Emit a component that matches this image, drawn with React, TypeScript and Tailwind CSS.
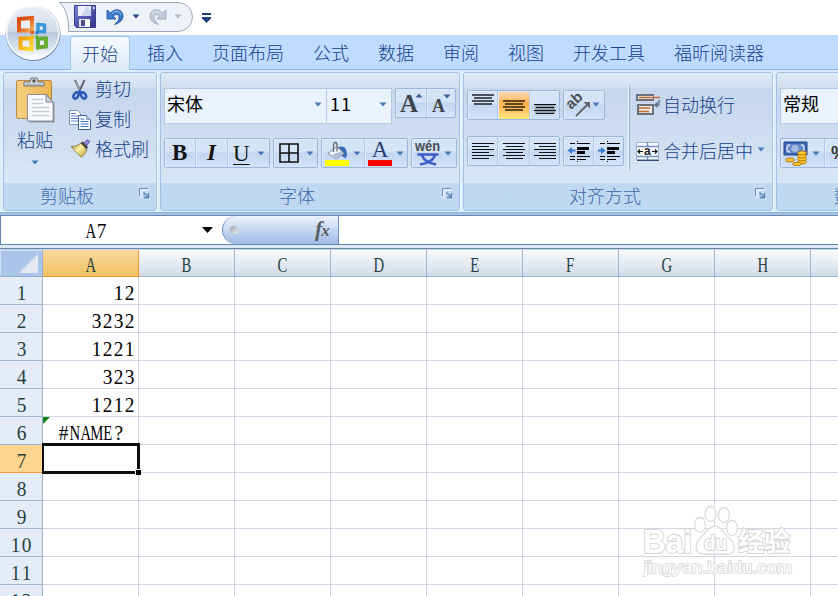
import React from "react";

const Caret = ({ className = "", color = "#4a78b5" }: { className?: string; color?: string }) => (
  <svg className={`shrink-0 ${className}`} width="8" height="5" viewBox="0 0 8 5">
    <path d="M0.5 0.5h7L4 4.5z" fill={color} />
  </svg>
);

const Launcher = () => (
  <svg width="11" height="11" viewBox="0 0 11 11" fill="none">
    <path d="M2 10.500V2H10.500" stroke="#fff" />
    <path d="M0.500 8V0.500H9" stroke="#6d93bd" />
    <path d="M4.500 4.500l4 4M9.500 5v4.500H5" stroke="#5b83b0" strokeWidth="1.3" />
  </svg>
);

const OfficeOrb = () => (
  <svg className="absolute left-1 top-[4px]" width="60" height="60" viewBox="0 0 60 60">
    <defs>
      <linearGradient id="orb" x1="0" y1="0" x2="0" y2="1">
        <stop offset="0" stopColor="#e9eef6" />
        <stop offset="0.47" stopColor="#d3dcea" />
        <stop offset="0.5" stopColor="#b9c6da" />
        <stop offset="0.8" stopColor="#dbe6f3" />
        <stop offset="1" stopColor="#fff" />
      </linearGradient>
      <linearGradient id="oRed" x1="0" y1="0" x2="1" y2="1">
        <stop offset="0" stopColor="#d9480f" />
        <stop offset="0.5" stopColor="#e2601c" />
        <stop offset="1" stopColor="#f5b05c" />
      </linearGradient>
      <linearGradient id="oYellow" x1="0" y1="0" x2="1" y2="1">
        <stop offset="0" stopColor="#ef9c09" />
        <stop offset="1" stopColor="#ffdc33" />
      </linearGradient>
    </defs>
    <circle cx="29" cy="29.500" r="27.500" fill="#76859c" />
    <circle cx="28.800" cy="28.800" r="26.300" fill="url(#orb)" stroke="#f7fbff" strokeWidth="1.600" />
    <g fill="#fff" fillOpacity="0.500">
      <path d="M15 15l13 -1v12.500H15z" stroke="url(#oRed)" strokeWidth="4" />
      <path d="M34 20.500l6.500.500v6.500H34z" stroke="#3b97d8" strokeWidth="3.400" />
      <path d="M16.500 34.500h11v11l-11-1.500z" stroke="url(#oYellow)" strokeWidth="4" />
      <path d="M34 34.500h8v8l-8 1z" stroke="#67ad35" strokeWidth="4" />
    </g>
    <path d="M26.500 26.500h3.500v3.500h-3.500z" fill="#e35f1b" />
    <path d="M31.500 27h3v3h-3z" fill="#277cc0" />
    <path d="M26.500 31.500h3.500v3h-3.500z" fill="#f5b919" />
    <path d="M31.500 31.500h3v3h-3z" fill="#55a82a" />
  </svg>
);

const SaveIcon = () => (
  <svg width="22" height="23" viewBox="0 0 22 23">
    <defs>
      <linearGradient id="sv" x1="0" y1="0" x2="1" y2="1">
        <stop offset="0" stopColor="#7d83dd" />
        <stop offset="1" stopColor="#2d3184" />
      </linearGradient>
    </defs>
    <path d="M0.500 0.500h21v22h-19l-2-2z" fill="url(#sv)" stroke="#3c3f91" />
    <path d="M4 1h13v10H4z" fill="#eef1fb" />
    <path d="M13 1l4 5v5H7z" fill="#cfd7ef" />
    <path d="M19 2h1.500v2H19z" fill="#fff" />
    <path d="M5 14h11v8H5z" fill="#dfe3f0" />
    <path d="M7 15h4v6H7z" fill="#4a4d91" />
    <path d="M11 15h5v7h-5z" fill="#fff" />
  </svg>
);

const UndoIcon = ({ gray = false }: { gray?: boolean }) => (
  <svg className={gray ? "-scale-x-100" : ""} width="18" height="18" viewBox="0 0 18 18">
    <path
      d="M1 2v9h9L7.500 8.200C10 5.500 13 6.200 13 9.500c0 2.600-1.700 4.700-4.500 7 5-1.500 8.500-4.200 8.500-8.500C17 1.500 9.500-.5 4.500 4.800z"
      fill={gray ? "#c5cddc" : "#3f78c6"}
      stroke={gray ? "#9ba8bd" : "#285ba9"}
      strokeWidth="0.900"
    />
    <path d="M5.500 6C9 2 14 2.500 15 7" fill="none" stroke={gray ? "#e5e9f0" : "#9fc4f0"} />
  </svg>
);

const PasteIcon = () => (
  <svg width="41" height="47" viewBox="0 0 41 47">
    <defs>
      <linearGradient id="clip" x1="0" y1="0" x2="1" y2="0">
        <stop offset="0" stopColor="#f7cf83" />
        <stop offset="1" stopColor="#edb650" />
      </linearGradient>
    </defs>
    <rect x="1.500" y="3.500" width="35" height="38" rx="1.500" fill="url(#clip)" stroke="#b58a45" />
    <path d="M9 9V5h6l1-4h6l1 4h6v4z" fill="#d5d8dc" stroke="#6f7479" />
    <circle cx="19" cy="4" r="1.800" fill="#55585c" />
    <path d="M11 8h16" stroke="#8b8e91" />
    <path d="M14 45.500V18h18l7.500 8v19.500z" fill="#8d949e" />
    <path d="M12.500 44V17.500h18.500l7 7.500v19z" fill="#fbfcff" stroke="#87909c" />
    <path d="M31 17.500V25h7z" fill="#ccd4de" stroke="#7c8794" />
    <path d="M16.500 22.500h12M16.500 26.500h12M16.500 30.500h18M16.500 34.500h18M16.500 38.500h18" stroke="#c4cad6" strokeWidth="1.300" />
  </svg>
);

const CutIcon = () => (
  <svg width="16" height="22" viewBox="0 0 16 22" fill="none">
    <path d="M3 1l6 13M12.500 1L6.500 14" stroke="#5e6671" strokeWidth="2" />
    <path d="M3.500 2l5 11" stroke="#d8dee8" strokeWidth="0.700" />
    <path d="M6.500 12l2.500 2" stroke="#2855b5" strokeWidth="3" />
    <ellipse cx="4" cy="16.500" rx="2.200" ry="3.200" transform="rotate(30 4 16.500)" stroke="#2d59bb" strokeWidth="2.600" />
    <ellipse cx="11.500" cy="16.500" rx="2.200" ry="3.200" transform="rotate(-30 11.500 16.500)" stroke="#2d59bb" strokeWidth="2.600" />
  </svg>
);

const CopyIcon = () => (
  <svg width="22" height="20" viewBox="0 0 22 20">
    <g stroke="#7894bd" fill="#fff">
      <path d="M0.500 0.500h8l3 3v11h-11z" />
      <path d="M2 3.500h5M2 6h7M2 8.500h7M2 11h7" stroke="#5d86c8" />
      <path d="M9.500 5.500h8l4 4v10h-12z" stroke="#385e99" />
      <path d="M17.500 5.500v4h4" fill="#c4d5ee" />
      <path d="M11.500 9h4M11.500 11.500h8M11.500 14h8M11.500 16.500h8" stroke="#3e6fc0" />
    </g>
  </svg>
);

const BrushIcon = () => (
  <svg width="21" height="19" viewBox="0 0 21 19">
    <defs>
      <linearGradient id="br" x1="0" y1="0" x2="1" y2="1">
        <stop offset="0" stopColor="#8c8130" />
        <stop offset="0.450" stopColor="#fff3a0" />
        <stop offset="1" stopColor="#b59336" />
      </linearGradient>
    </defs>
    <path d="M13 5.500L17 .8l3 1.500-4 5z" fill="#9b8bdd" stroke="#6a59ae" />
    <path d="M1 7.500C5 7.500 8 6.500 11 4l6 6c-1 3.500-3 6.500-6 8z" fill="url(#br)" stroke="#817139" strokeWidth="0.800" />
    <path d="M10.500 4l2.500-1.500L18 8l-1.500 2.500z" fill="#474747" />
  </svg>
);

const BucketIcon = () => (
  <svg width="24" height="27" viewBox="0 0 24 27">
    <path d="M13 7c6-2 9 1 9 8l-1.500 3.500-3.500-2.500c1-4-.5-6-4-6z" fill="#386bb5" />
    <path d="M3 13.500l9-7 7 7-8 5.500z" fill="#f2f6fc" stroke="#7f8ca0" />
    <path d="M7 14.500l9-3 2 2.500-7 4z" fill="#aabbd8" />
    <path d="M8.500 12V5.500c0-4 3.500-4 3.500 0v6" fill="none" stroke="#636a74" strokeWidth="1.300" />
    <path d="M0 20h24v6H0z" fill="#ff0" />
  </svg>
);

const WenIcon = () => (
  <svg width="26" height="28" viewBox="0 0 26 28">
    <text x="0" y="12" textLength="25" lengthAdjust="spacingAndGlyphs" fontFamily="Liberation Sans" fontSize="14" fontWeight="700" fill="#484c55">wén</text>
    <path d="M2.500 15.500h21M7 16.500c2 5 8 8 14 9M20 16.500c-2 5-8 8-15 9" fill="none" stroke="#3c5dc4" strokeWidth="2.400" />
  </svg>
);

const AlignIcon = ({ kind }: { kind: "top" | "middle" | "bottom" | "left" | "center" | "right" }) => {
  const vertical = kind === "top" || kind === "middle" || kind === "bottom";
  const widths = vertical ? [22, 18, 22, 18] : [22, 17, 22, 17, 22, 17];
  const start = kind === "top" ? 0 : kind === "middle" ? 6 : kind === "bottom" ? 10 : 0;
  return (
    <svg width="24" height="24" viewBox="0 0 24 24" shapeRendering="crispEdges">
      {kind === "bottom" && <path d="M2 11h20v10H2z" fill="#98a3b3" />}
      {widths.map((w, i) => (
        <rect
          key={i}
          x={kind === "left" ? 1 : kind === "right" ? 23 - w : 12 - w / 2}
          y={start + i * 3 + 1}
          width={w}
          height={kind === "top" || kind === "middle" ? 2 : 1}
          fill={kind === "middle" ? "#62461d" : kind === "top" ? "#4c525c" : "#101216"}
        />
      ))}
    </svg>
  );
};

const IndentIcon = ({ right = false }: { right?: boolean }) => (
  <svg width="24" height="21" viewBox="0 0 24 21">
    <g fill="#050607" shapeRendering="crispEdges">
      <path d="M3 2h5v1H3zM10 2h13v1H10zM10 6h12v3H10zM10 10h8v3h-8zM3 15h5v1H3zM10 15h13v1H10zM3 18h5v1H3zM10 18h9v1h-9zM10 0h1v1h-1zM10 20h1v1h-1z" />
    </g>
    <path d={right ? "M1 8.500h3V6l4.500 3.500L4 13v-2.500H1z" : "M8.500 8.500H5V6L.5 9.500 5 13v-2.500h3.500z"} fill="#3979d4" />
  </svg>
);

const OrientIcon = () => (
  <svg width="28" height="26" viewBox="0 0 28 26">
    <text x="0" y="0" transform="translate(7 18) rotate(-43)" fontFamily="Liberation Sans" fontSize="15" fontWeight="700" fill="#4c5058">ab</text>
    <path d="M12 24L24 12" fill="none" stroke="#66666d" strokeWidth="2" />
    <path d="M19.500 10H26v6.500z" fill="#66666d" />
  </svg>
);

const WrapIcon = () => (
  <svg width="25" height="24" viewBox="0 0 25 24">
    <path d="M0 1h18v7H0zM1 11h17v11H1z" fill="#6b717c" />
    <path d="M2 3h15v3H2zM3 13h13v7H3z" fill="#eee9e2" />
    <path d="M3 4.500h21M3 15h11M3 18.500h10" stroke="#c46c35" strokeWidth="1.500" />
    <path d="M23 7v5h-3" fill="none" stroke="#657897" strokeWidth="1.500" />
    <path d="M21.500 8.500v6.500l-3.500-3z" fill="#566a8c" />
  </svg>
);

const MergeIcon = () => (
  <svg width="24" height="19" viewBox="0 0 24 19">
    <path d="M.5.500h22v17H.5z" fill="#f9fbff" stroke="#99afd0" />
    <path d="M1 4.500h22M1 14.500h22M11.500 0v4M11.500 15v3" stroke="#7694c2" strokeWidth="1.500" />
    <path d="M1 18.500h22" stroke="#334b6f" />
    <path d="M2 9.500h5M4 7.500L2 9.500 4 11.500M21 9.500h-5M19 7.500L21 9.500 19 11.500" fill="none" stroke="#111" strokeWidth="1.200" />
    <text x="8" y="13" fontFamily="Liberation Sans" fontSize="12" fontWeight="700" fill="#222">a</text>
  </svg>
);

const MoneyIcon = () => (
  <svg width="26" height="25" viewBox="0 0 26 25">
    <path d="M1 1h23v13H1z" fill="#3e65ae" stroke="#26488b" />
    <path d="M3 3h19v9H3z" fill="#6588c8" />
    <circle cx="12" cy="7.500" r="3.500" fill="#aabbe1" />
    <path d="M7 4c-4 0-4 7 0 7M18 4c4 0 4 7 0 7" fill="none" stroke="#d2dcf4" strokeWidth="1.500" />
    <g fill="#ffc72c" stroke="#a06c0d" strokeWidth="0.800">
      <ellipse cx="19" cy="21" rx="4.500" ry="2" />
      <ellipse cx="19" cy="18" rx="4.500" ry="2" />
      <ellipse cx="19" cy="15" rx="4.500" ry="2" />
      <ellipse cx="19" cy="12" rx="4.500" ry="2" />
      <ellipse cx="7" cy="19" rx="4.500" ry="2" />
      <ellipse cx="14" cy="23" rx="4.500" ry="1.800" />
    </g>
  </svg>
);

const BtnGroup = ({ className = "", children }: { className?: string; children: React.ReactNode }) => (
  <div
    className={`flex h-[30px] shrink-0 rounded-[2px] border border-[#9bb6dc] bg-linear-to-b from-[#d4e3f5] from-45% via-[#c3d6f0] via-50% to-[#d3e3f8] ${className}`}
  >
    {children}
  </div>
);

const Btn = ({ className = "", children }: { className?: string; children: React.ReactNode }) => (
  <div className={`flex shrink-0 items-center border-r border-[#b3c8e4] shadow-[inset_1px_1px_0_#dfeafa] last:border-r-0 ${className}`}>{children}</div>
);

const Group = ({ className = "", label, labelClass = "", launcher = true, children }: {
  className?: string; label: string; labelClass?: string; launcher?: boolean; children: React.ReactNode;
}) => (
  <section
    className={`flex h-[139px] shrink-0 flex-col overflow-hidden rounded-[3px] border border-[#a3c1e2] shadow-[1px_1px_0_#f0f8ff] ${className}`}
  >
    <div className="h-[110px] bg-linear-to-b from-[#dfeaf6] from-0% via-[#d3dff0] via-13% to-[#d9e8f6]">
      <div className="h-full bg-linear-to-b from-transparent from-13% via-[#c7d7ec] via-14% to-transparent">{children}</div>
    </div>
    <div className="flex h-[27px] items-center bg-linear-to-b from-[#c1d8f1] to-[#bfd9f2] text-[#3e6aaa]">
      <span className={`mb-[3px] grow leading-none ${labelClass}`}>{label}</span>
      {launcher && <span className="mr-[6px] mb-[6px] flex"><Launcher /></span>}
    </div>
  </section>
);

const tabs = ["开始", "插入", "页面布局", "公式", "数据", "审阅", "视图", "开发工具", "福昕阅读器"];

// Squeezes each glyph into an equal 11px cell, like the half-width glyphs of a Song typeface.
const HalfWidth = ({ text }: { text: string }) => (
  <span className="flex font-['Liberation_Serif',serif] text-[22px] leading-[28px]">
    {text.split("").map((c, i) => (
      <span key={i} className="flex w-[11px] justify-center">
        <span className={/[A-Z]/.test(c) ? "scale-x-[0.67]" : "scale-x-[0.88]"}>{c}</span>
      </span>
    ))}
  </span>
);

const columns = ["A", "B", "C", "D", "E", "F", "G", "H", ""];
const values = ["12", "3232", "1221", "323", "1212", "#NAME?", "", "", "", "", "", ""];

const PawMark = () => (
  <svg className="absolute left-[640px] top-[500px]" width="158" height="80" viewBox="0 0 158 80">
    <g fill="#fff" fillOpacity="0.850" stroke="#dcdcdc" strokeWidth="1.300">
      <ellipse cx="60" cy="25" rx="5.500" ry="7.500" />
      <ellipse cx="70.500" cy="14" rx="5.500" ry="7.500" />
      <ellipse cx="84" cy="15" rx="5.500" ry="7.500" />
      <ellipse cx="92" cy="28" rx="5.500" ry="7.500" />
      <path d="M75 26c6 0 7 6 13 11 9 7 8 18-2 17H64c-10 0-10-10-3-17 6-5 8-11 14-11z" />
    </g>
    <g fill="#fff" stroke="#d6d6d6" strokeWidth="2" paintOrder="stroke" fontFamily="Liberation Sans" fontWeight="700">
      <text x="3" y="53" fontSize="34" textLength="49" lengthAdjust="spacingAndGlyphs">Bai</text>
      <text x="64" y="50" fontSize="20" textLength="23" lengthAdjust="spacingAndGlyphs">du</text>
      <text x="98" y="51" fontSize="26" fontFamily="Noto Sans CJK SC" textLength="52">经验</text>
      <text x="4" y="73" fontSize="17" fontWeight="400" strokeWidth="1.600" textLength="148" lengthAdjust="spacingAndGlyphs">jingyan.baidu.com</text>
    </g>
  </svg>
);

export default function App() {
  return (
    <div className="relative flex h-[596px] w-[838px] flex-col overflow-hidden bg-white font-['Noto_Sans_CJK_SC',sans-serif] text-[18px] font-light text-[#15428b]">
      <header className="flex h-[35px] shrink-0">
        <div className="relative ml-[59px] mt-[2px] h-[30px] w-[137px]">
          <svg className="absolute inset-0" width="137" height="30" viewBox="0 0 137 30">
            <path d="M.5.500H119a14.500 14.500 0 0 1 0 29H9.500C10 17 7 6 .5.500z" fill="#edf2f9" stroke="#9ba8bb" />
          </svg>
          <div className="relative flex h-[28px] items-center pl-[15px]">
            <SaveIcon />
            <span className="ml-[10px] mt-px"><UndoIcon /></span>
            <Caret className="ml-[8px]" color="#24488c" />
            <span className="ml-[9px] mt-px"><UndoIcon gray /></span>
            <Caret className="ml-[7px]" color="#b5b8bd" />
          </div>
        </div>
        <svg className="ml-[5px] mt-[12px]" width="11" height="12" viewBox="0 0 11 12">
          <path d="M1 2h9M1 6h9" stroke="#1e3f7c" strokeWidth="2" />
          <path d="M1.500 7h8L5.500 11z" fill="#1e3f7c" />
        </svg>
      </header>

      <nav className="flex h-[35px] shrink-0 items-end gap-[5px] border-b border-[#8db2e3] bg-[#bfdbff] pl-[70px]">
        {tabs.map((t, i) => (
          <div
            key={t}
            className={
              i === 0
                ? "-mb-px h-[34px] rounded-t-[3px] border border-b-0 border-[#a0c4ef] bg-linear-to-b from-[#f5faff] to-[#dfeaf7] px-[11px] leading-[32px]"
                : "h-[33px] px-[12px] leading-[33px]"
            }
          >
            {t}
          </div>
        ))}
      </nav>

      <main className="flex h-[142px] shrink-0 gap-[3px] overflow-hidden border-b border-[#d3f7fd] bg-[#dcedfb] pl-[3px] pt-[2px]">
        <Group className="w-[154px]" label="剪贴板" labelClass="pl-[36px]">
          <div className="flex">
            <div className="flex w-[62px] flex-col items-center">
              <div className="mt-[4px] ml-px"><PasteIcon /></div>
              <span className="mt-[5px] leading-[21px]">粘贴</span>
              <Caret className="mt-[10px]" />
            </div>
            <div className="flex flex-col pt-[2px] leading-none">
              <div className="flex h-[30px] items-center"><span className="ml-[6px] mr-[7px]"><CutIcon /></span><span className="mb-[4px]">剪切</span></div>
              <div className="flex h-[30px] items-center"><span className="ml-[3px] mr-[4px]"><CopyIcon /></span><span className="mb-[4px]">复制</span></div>
              <div className="flex h-[30px] items-center"><span className="ml-[4px] mr-[4px] mb-[4px]"><BrushIcon /></span><span className="mb-[4px]">格式刷</span></div>
            </div>
          </div>
        </Group>

        <Group className="w-[300px]" label="字体" labelClass="pl-[118px]">
          <div className="flex flex-col pl-[3px] pt-[15px]">
            <div className="flex">
              <div className="flex h-[36px] w-[163px] items-center border border-[#b3c9e6] bg-[#eaf2fb] pl-[2px] pr-[4px] font-normal text-black">
                <span className="mb-[6px] grow leading-none">宋体</span><Caret className="mb-[3px]" />
              </div>
              <div className="flex h-[36px] w-[65px] items-center border border-l-0 border-[#b3c9e6] bg-[#eaf2fb] pl-[3px] pr-[4px] text-black">
                <span className="mb-[6px] grow font-normal leading-none tracking-[1px]">11</span><Caret className="mb-[3px]" />
              </div>
              <BtnGroup className="ml-[3px] w-[61px]">
                <Btn className="w-[31px] pl-[4px] font-['Liberation_Serif',serif] text-[25px] font-bold leading-none text-[#3f444c]">
                  <span>A</span><Caret className="-ml-[3px] mb-[16px] rotate-180" color="#425f98" />
                </Btn>
                <Btn className="w-[28px] pl-[5px] font-['Liberation_Serif',serif] text-[18px] font-bold leading-none text-[#3f444c]">
                  <span className="mt-[5px]">A</span><Caret className="-ml-[2px] mb-[14px]" color="#425f98" />
                </Btn>
              </BtnGroup>
            </div>
            <div className="mt-[14px] flex">
              <BtnGroup className="w-[106px] font-['Liberation_Serif',serif] text-[23px] text-[#111]">
                <Btn className="w-[31px] pl-[7px] font-bold">B</Btn>
                <Btn className="w-[32px] pl-[11px] font-bold italic">I</Btn>
                <Btn className="w-[41px] pl-[5px]"><span className="leading-[23px] underline underline-offset-[3px] decoration-1">U</span><Caret className="ml-[7px]" /></Btn>
              </BtnGroup>
              <BtnGroup className="ml-[3px] w-[45px]">
                <Btn className="w-[43px] pl-[5px]">
                  <svg width="20" height="20" viewBox="0 0 20 20"><path d="M1 1h18v18H1zM10 1v18M1 10h18" fill="none" stroke="#101010" strokeWidth="1.600" /></svg>
                  <Caret className="ml-[7px]" />
                </Btn>
              </BtnGroup>
              <BtnGroup className="ml-[3px] w-[87px]">
                <Btn className="w-[43px] pl-[3px]"><BucketIcon /><Caret className="ml-[4px]" /></Btn>
                <Btn className="w-[42px] pl-[3px]">
                  <span className="flex w-[24px] flex-col items-center font-['Liberation_Serif',serif] text-[23px] leading-[20px] text-[#243d70]">A<i className="h-[6px] w-full bg-[#ff0000]" /></span>
                  <Caret className="ml-[4px]" />
                </Btn>
              </BtnGroup>
              <BtnGroup className="ml-[3px] w-[46px]"><Btn className="w-[44px] pl-[3px]"><WenIcon /><Caret className="ml-[3px]" /></Btn></BtnGroup>
            </div>
          </div>
        </Group>

        <Group className="w-[310px]" label="对齐方式" labelClass="pl-[105px]">
          <div className="flex pl-[3px]">
            <div className="flex w-[161px] flex-col gap-[16px] pt-[17px]">
              <div className="flex">
                <BtnGroup className="w-[93px]">
                  <Btn className="w-[30px] justify-center"><AlignIcon kind="top" /></Btn>
                  <Btn className="w-[32px] justify-center bg-linear-to-b from-[#fbd6a4] from-10% via-[#ffae48] via-45% to-[#ffe982]"><AlignIcon kind="middle" /></Btn>
                  <Btn className="w-[29px] justify-center"><AlignIcon kind="bottom" /></Btn>
                </BtnGroup>
                <BtnGroup className="ml-[3px] w-[42px]"><Btn className="w-[40px]"><OrientIcon /><Caret className="mb-[2px]" /></Btn></BtnGroup>
              </div>
              <div className="flex">
                <BtnGroup className="w-[93px]">
                  <Btn className="w-[30px] justify-center pt-[5px]"><AlignIcon kind="left" /></Btn>
                  <Btn className="w-[32px] justify-center pt-[5px]"><AlignIcon kind="center" /></Btn>
                  <Btn className="w-[29px] justify-center pt-[5px]"><AlignIcon kind="right" /></Btn>
                </BtnGroup>
                <BtnGroup className="ml-[3px] w-[61px]">
                  <Btn className="w-[30px] pl-[3px] pt-px"><IndentIcon /></Btn>
                  <Btn className="w-[29px] pl-[3px] pt-px"><IndentIcon right /></Btn>
                </BtnGroup>
              </div>
            </div>
            <div className="mt-[13px] h-[84px] w-[2px] border-l border-r border-l-[#f3f8ff] border-r-[#8eaed8]" />
            <div className="flex flex-col pl-[6px] pt-[17px] leading-none">
              <div className="flex h-[30px] items-center"><WrapIcon /><span className="ml-[2px] mb-[2px]">自动换行</span></div>
              <div className="mt-[16px] flex h-[30px] items-center"><MergeIcon /><span className="ml-[3px] mb-[2px]">合并后居中</span><Caret className="ml-[4px] mb-[4px]" /></div>
            </div>
          </div>
        </Group>

        <Group className="w-[150px]" label="数字" labelClass="pl-[57px]">
          <div className="pl-[3px] pt-[15px]">
            <div className="flex h-[36px] items-center border border-[#b3c9e6] bg-[#eaf2fb] pl-[2px] font-normal text-black"><span className="mb-[6px] leading-none">常规</span></div>
            <BtnGroup className="mt-[14px] w-[120px]">
              <Btn className="w-[44px] pl-[2px]"><MoneyIcon /><Caret className="ml-[3px]" /></Btn>
              <Btn className="w-[40px] pl-[6px] font-['Liberation_Sans',sans-serif] font-bold text-[#333]">%</Btn>
            </BtnGroup>
          </div>
        </Group>
      </main>
      <div className="h-[3px] shrink-0 bg-linear-to-b from-[#8fb0da] to-[#b4cae8]" />

      <div className="flex h-[30px] shrink-0 border-y border-l border-[#6487b0] bg-white">
        <div className="flex w-[221px] items-center text-black">
          <span className="ml-[84px] mt-[2px]"><HalfWidth text="A7" /></span>
          <svg className="ml-[95px]" width="11" height="6" viewBox="0 0 11 6"><path d="M0 0h11L5.500 6z" fill="#000" /></svg>
        </div>
        <div className="flex h-[28px] w-[117px] items-center rounded-l-[15px] border-l border-r border-[#6f93c2] bg-linear-to-b from-[#edf3fc] to-[#9fbbe4] pl-[7px]">
          <span className="size-[8px] rounded-full bg-linear-to-br from-[#999da8] to-[#f2f3f7]" />
          <span className="ml-[77px] pb-[2px] font-['Liberation_Serif',serif] text-[22px] font-bold italic leading-none text-[#595e68]">f<span className="-ml-px text-[17px]">x</span></span>
        </div>
      </div>
      <div className="h-[4px] shrink-0 border-b border-[#6487b0] bg-[#dce8f5]" />

      <div className="flex h-[28px] shrink-0 border-t border-[#c8d6e6] text-[#27413e]">
        <div className="flex w-[43px] shrink-0 items-end justify-end border-b border-r border-[#94b1d5] bg-[#abc5ea] pb-[3px] pr-[4px] shadow-[inset_1px_1px_0_#cfdef4]">
          <svg width="19" height="19" viewBox="0 0 19 19"><path d="M19 0v19H0z" fill="#e5eaf2" /></svg>
        </div>
        {columns.map((c, i) => (
          <div
            key={i}
            className={`flex w-[96px] shrink-0 justify-center border-b border-r ${
              i === 0 ? "border-[#f29536] bg-linear-to-b from-[#f9d99f] to-[#f1c15f]" : "border-[#9eb6ce] bg-linear-to-b from-[#f9fcfd] to-[#d3dbe9]"
            }`}
          >
            <span className="mt-px"><HalfWidth text={c} /></span>
          </div>
        ))}
      </div>

      {values.map((v, r) => (
        <div key={r} className="flex h-[28px] shrink-0">
          <div
            className={`flex w-[43px] shrink-0 justify-center border-b border-r text-[#27413e] ${
              r === 6 ? "border-[#f29536] bg-[#ffd58d]" : "border-[#9eb6ce] bg-[#e4ecf7]"
            }`}
          >
            <span className="mt-[2px]"><HalfWidth text={String(r + 1)} /></span>
          </div>
          {columns.map((_, c) => (
            <div key={c} className="relative flex w-[96px] shrink-0 border-b border-r border-[#d0d7e5] text-black">
              {c === 0 && <span className={`mt-[2px] ${r === 5 ? "ml-[15px]" : "ml-auto mr-[3px]"}`}><HalfWidth text={v} /></span>}
              {c === 0 && r === 5 && <svg className="absolute left-0 top-0" width="7" height="7" viewBox="0 0 7 7"><path d="M0 0h7L0 7z" fill="#138013" /></svg>}
              {c === 0 && r === 6 && (
                <div className="absolute -left-px -top-[2px] z-10 h-[31px] w-[98px] border-[3px] border-l-2 border-[#0c0e08]">
                  <i className="absolute -bottom-[4px] -right-[4px] size-[6px] border-l border-t border-white bg-black" />
                </div>
              )}
            </div>
          ))}
        </div>
      ))}
      <PawMark />
      <OfficeOrb />
    </div>
  );
}
